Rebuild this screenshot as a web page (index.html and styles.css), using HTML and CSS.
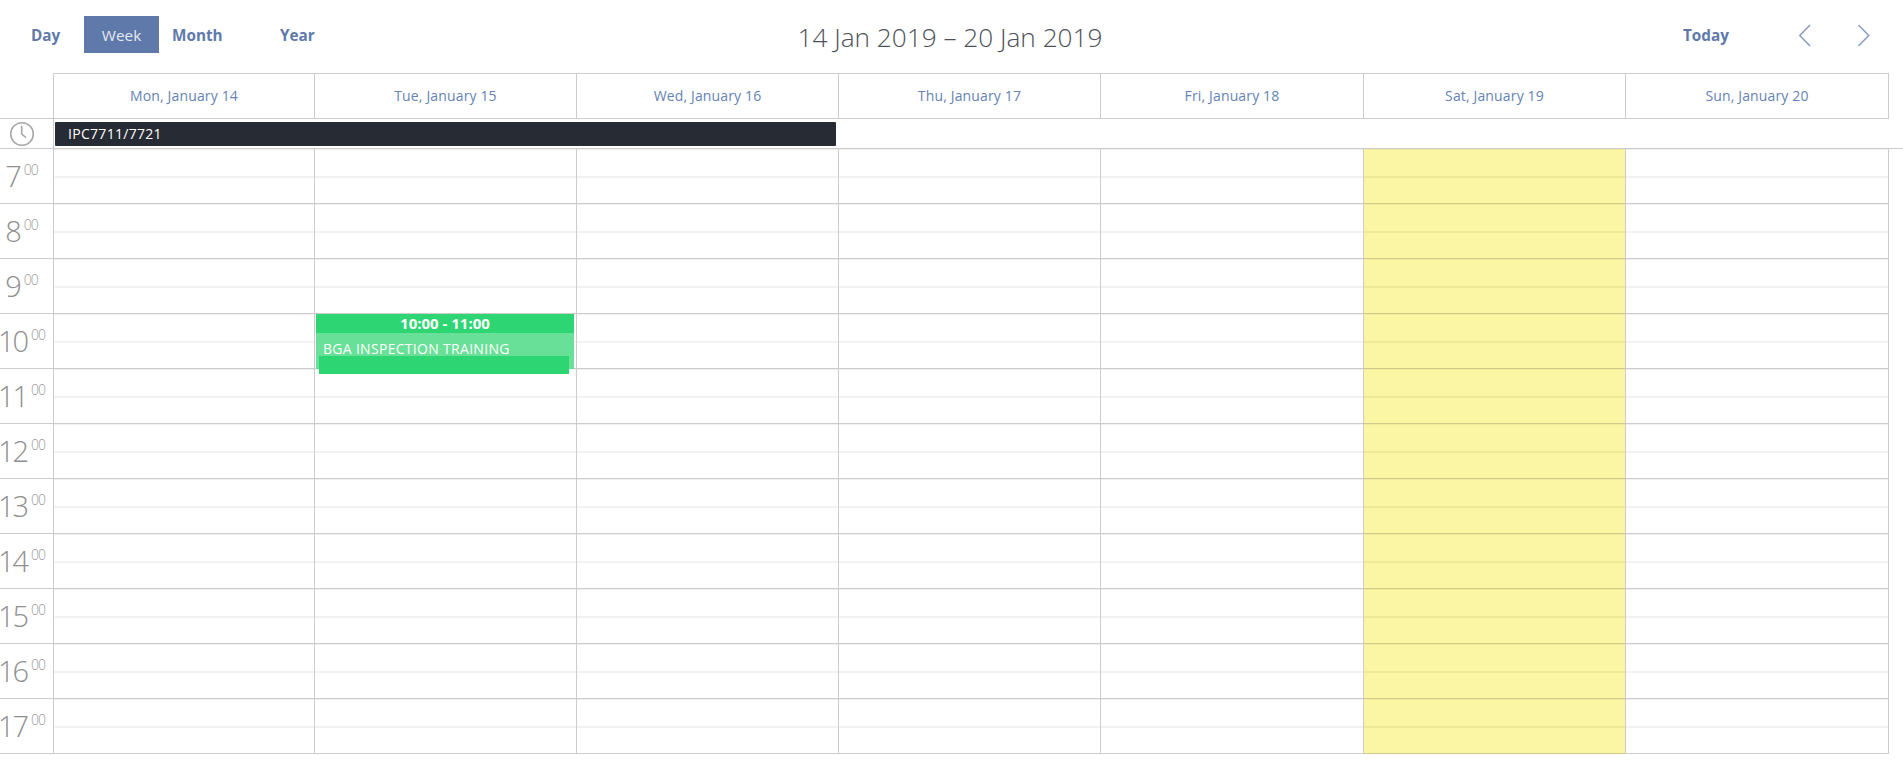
FILE: index.html
```html
<!DOCTYPE html>
<html lang="en">
<head>
<meta charset="utf-8">
<title>Calendar</title>
<link rel="stylesheet" href="styles.css">
</head>
<body>
<div class="toolbar">
  <nav class="views">
    <a class="view view-day">Day</a>
    <a class="view view-week active">Week</a>
    <a class="view view-month">Month</a>
    <a class="view view-year">Year</a>
  </nav>
  <h1 class="range">14 Jan 2019 – 20 Jan 2019</h1>
  <div class="controls">
    <a class="today">Today</a>
    <svg class="chev chev-prev" width="14" height="24" viewBox="0 0 14 24"><path d="M12 2 1.8 12.5 12 23"/></svg>
    <svg class="chev chev-next" width="14" height="24" viewBox="0 0 14 24"><path d="M1.5 2 11.7 12.5 1.5 23"/></svg>
  </div>
</div>
<div class="days row">
  <div class="gutter"></div>
  <div class="day">Mon, January 14</div>
  <div class="day">Tue, January 15</div>
  <div class="day">Wed, January 16</div>
  <div class="day">Thu, January 17</div>
  <div class="day">Fri, January 18</div>
  <div class="day">Sat, January 19</div>
  <div class="day">Sun, January 20</div>
</div>
<div class="allday">
  <div class="gutter clock-cell">
    <svg width="26" height="26" viewBox="0 0 26 26"><circle cx="13" cy="13" r="11.3"/><path d="M12.7 4.7V13l4.3 3.6"/></svg>
  </div>
  <div class="allday-bar">IPC7711/7721</div>
</div>
<div class="hours">
  <div class="row hour"><div class="gutter label"><span class="h">7</span><span class="m">00</span></div><div class="cell"></div><div class="cell"></div><div class="cell"></div><div class="cell"></div><div class="cell"></div><div class="cell weekend"></div><div class="cell"></div></div>
  <div class="row hour"><div class="gutter label"><span class="h">8</span><span class="m">00</span></div><div class="cell"></div><div class="cell"></div><div class="cell"></div><div class="cell"></div><div class="cell"></div><div class="cell weekend"></div><div class="cell"></div></div>
  <div class="row hour"><div class="gutter label"><span class="h">9</span><span class="m">00</span></div><div class="cell"></div><div class="cell"></div><div class="cell"></div><div class="cell"></div><div class="cell"></div><div class="cell weekend"></div><div class="cell"></div></div>
  <div class="row hour"><div class="gutter label"><span class="h">10</span><span class="m">00</span></div><div class="cell"></div><div class="cell">
    <div class="event">
      <div class="event-time">10:00 - 11:00</div>
      <div class="event-title">BGA INSPECTION TRAINING</div>
      <div class="event-foot"></div>
    </div>
  </div><div class="cell"></div><div class="cell"></div><div class="cell"></div><div class="cell weekend"></div><div class="cell"></div></div>
  <div class="row hour"><div class="gutter label"><span class="h">11</span><span class="m">00</span></div><div class="cell"></div><div class="cell"></div><div class="cell"></div><div class="cell"></div><div class="cell"></div><div class="cell weekend"></div><div class="cell"></div></div>
  <div class="row hour"><div class="gutter label"><span class="h">12</span><span class="m">00</span></div><div class="cell"></div><div class="cell"></div><div class="cell"></div><div class="cell"></div><div class="cell"></div><div class="cell weekend"></div><div class="cell"></div></div>
  <div class="row hour"><div class="gutter label"><span class="h">13</span><span class="m">00</span></div><div class="cell"></div><div class="cell"></div><div class="cell"></div><div class="cell"></div><div class="cell"></div><div class="cell weekend"></div><div class="cell"></div></div>
  <div class="row hour"><div class="gutter label"><span class="h">14</span><span class="m">00</span></div><div class="cell"></div><div class="cell"></div><div class="cell"></div><div class="cell"></div><div class="cell"></div><div class="cell weekend"></div><div class="cell"></div></div>
  <div class="row hour"><div class="gutter label"><span class="h">15</span><span class="m">00</span></div><div class="cell"></div><div class="cell"></div><div class="cell"></div><div class="cell"></div><div class="cell"></div><div class="cell weekend"></div><div class="cell"></div></div>
  <div class="row hour"><div class="gutter label"><span class="h">16</span><span class="m">00</span></div><div class="cell"></div><div class="cell"></div><div class="cell"></div><div class="cell"></div><div class="cell"></div><div class="cell weekend"></div><div class="cell"></div></div>
  <div class="row hour"><div class="gutter label"><span class="h">17</span><span class="m">00</span></div><div class="cell"></div><div class="cell"></div><div class="cell"></div><div class="cell"></div><div class="cell"></div><div class="cell weekend"></div><div class="cell"></div></div>
</div>
```
FILE: styles.css
```css
* { box-sizing: border-box; }
html, body { margin: 0; padding: 0; background: #fff; overflow: hidden; }
body { font-family: "Open Sans", "Noto Sans", sans-serif; color: #5f7aaa; width: 1903px; height: 771px; }

.toolbar { height: 73px; display: grid; grid-template-columns: 620px 660px 623px; align-items: start; }
.views { display: flex; padding: 16px 0 0 31px; }
.view { height: 37px; padding-top: 1px; line-height: 37px; font-size: 15.3px; font-weight: 700; }
.view-day { width: 53px; }
.view-week { width: 75px; background: #5f7aaa; color: #e4e9f2; font-weight: 400; text-align: center; }
.view-month { width: 108px; margin-left: 13px; }
.range { margin: 19px 0 0 0; font-size: 26.2px; line-height: 36px; font-weight: 300; color: #4d5159; text-align: center; }
.controls { display: flex; padding: 16px 0 0 403px; align-items: center; height: 53px; }
.today { width: 115px; height: 37px; padding-top: 1px; line-height: 37px; font-size: 15.3px; font-weight: 700; }
.chev { fill: none; stroke: #8c9fc3; stroke-width: 1.6; }
.chev-next { margin-left: 45px; }

.row { display: grid; grid-template-columns: 53px 261px 262px 262px 262px 263px 262px 264px; }
.days { height: 46px; }
.day { border-top: 1px solid #ccc; border-left: 1px solid #ccc; border-bottom: 1px solid #ccc; text-align: center; line-height: 43px; font-size: 14px; letter-spacing: 0.15px; color: #6583b3; }
.day:last-child { border-right: 1px solid #ccc; }
.days .gutter { border-bottom: 1px solid #ccc; }

.allday { height: 30px; display: flex; border-bottom: 1px solid #ccc; }
.clock-cell { width: 54px; flex: none; border-right: 1px solid #ccc; display: flex; align-items: center; padding: 1px 0 0 9px; }
.clock-cell svg { fill: none; stroke: #a8a8a8; stroke-width: 1.6; display: block; }
.allday-bar { width: 781px; height: 24px; margin: 3px 0 0 1px; padding-left: 13px; background: #272b33; color: #fff; font-size: 14px; line-height: 24px; border-radius: 1px; letter-spacing: 0.3px; }

.hour { height: 55px; }
.label { border-bottom: 1px solid #ccc; display: flex; justify-content: center; align-items: flex-start; white-space: nowrap; color: #8f8f8f; font-weight: 300; padding: 9px 10px 0 0; }
.h { font-size: 29px; line-height: 36px; letter-spacing: -2px; }
.m { font-size: 14px; line-height: 22px; margin: 1px 0 0 4px; letter-spacing: -1px; color: #9a9a9a; }
.cell { position: relative; border-left: 1px solid #ccc; border-bottom: 1px solid #ccc; background: linear-gradient(#f2f2f2, #f2f2f2) 0 27px / 100% 2px no-repeat, linear-gradient(#f0f0f0, #f0f0f0) 0 0 / 100% 1px no-repeat; }
.cell:last-child { border-right: 1px solid #ccc; }
.weekend { background: linear-gradient(#efe997, #efe997) 0 27px / 100% 2px no-repeat, linear-gradient(#f0ea9a, #f0ea9a) 0 0 / 100% 1px no-repeat, #fbf6a3; border-bottom-color: #cfca8c; }

.event { position: absolute; z-index: 1; left: 1px; right: 2px; top: 0; height: 55px; background: #69e097; color: #fff; }
.event-time { height: 19px; background: #2dd672; text-align: center; font-size: 15px; font-weight: 700; line-height: 18px; }
.event-title { font-size: 14px; line-height: 17px; padding: 7px 0 0 7px; letter-spacing: 0.3px; }
.event-foot { position: absolute; left: 3px; right: 5px; top: 42px; height: 18px; background: #2dd672; }
```
